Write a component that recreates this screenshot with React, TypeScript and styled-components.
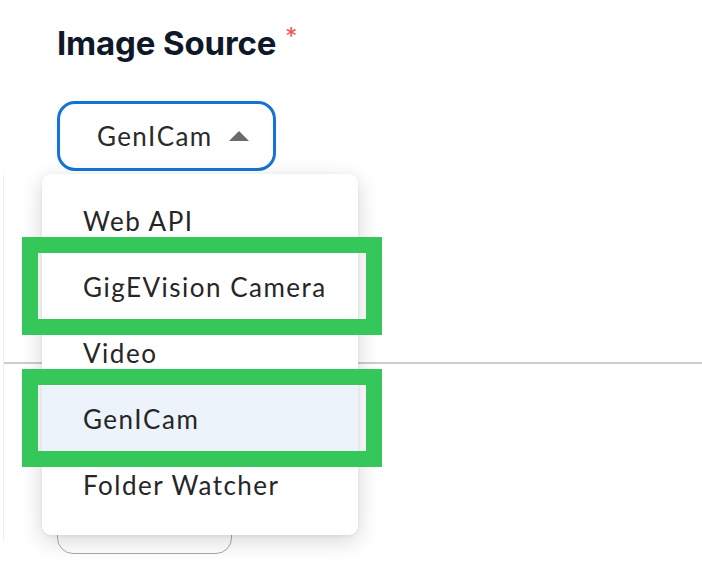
import React from 'react'
import styled, { createGlobalStyle } from 'styled-components'

const GlobalStyle = createGlobalStyle`
  html, body {
    margin: 0;
    padding: 0;
    background: #ffffff;
  }
  * {
    box-sizing: border-box;
  }
`

const sources = ['Web API', 'GigEVision Camera', 'Video', 'GenICam', 'Folder Watcher']
const marked = ['GigEVision Camera', 'GenICam']

const App = () => {
  const [open] = React.useState(true)
  const selected = 'GenICam'

  return (
    <Page>
      <GlobalStyle />
      <Title>
        <span>Image Source</span>
        <Required>*</Required>
      </Title>

      <SelectWrap>
        <Select>
          <SelectLabel>{selected}</SelectLabel>
          <Caret />
        </Select>

        {open ? (
          <Menu>
            {sources.map((s) => (
              <Item key={s} $active={s === selected} $marked={marked.includes(s)}>
                {s}
              </Item>
            ))}
          </Menu>
        ) : null}
      </SelectWrap>

      <Panel>
        <Divider />
        <Ghost />
      </Panel>
    </Page>
  )
}

export default App

const Page = styled.div`
  position: relative;
  width: 702px;
  height: 572px;
  overflow: hidden;
  font-family: Lato, 'Noto Sans', sans-serif;
`

const Title = styled.h2`
  display: flex;
  align-items: flex-start;
  gap: 9px;
  margin: 0;
  height: 63px;
  padding: 23px 0 0 57px;
  font-family: Inter, 'Noto Sans', sans-serif;
  font-weight: 700;
  font-size: 33px;
  line-height: 40px;
  color: #0f1828;
  letter-spacing: -0.15px;
`

const Required = styled.span`
  margin-top: 2px;
  color: #f2564d;
  font-size: 24px;
  line-height: 24px;
  font-weight: 400;
`

const SelectWrap = styled.div`
  position: relative;
  margin: 38px 0 0 57px;
  width: 219px;
  z-index: 2;
`

const Select = styled.div`
  display: flex;
  align-items: center;
  gap: 16px;
  height: 70px;
  padding-left: 37px;
  border: 3px solid #1473d6;
  border-radius: 18px;
  background: #fff;
`

const SelectLabel = styled.span`
  font-size: 26px;
  letter-spacing: 1.4px;
  color: #2a2a2a;
`

const Caret = styled.span`
  width: 0;
  height: 0;
  border-left: 10px solid transparent;
  border-right: 10px solid transparent;
  border-bottom: 10px solid #6b6b6b;
`

const Menu = styled.ul`
  position: absolute;
  top: calc(100% + 3px);
  left: -15px;
  width: 316px;
  margin: 0;
  padding: 14px 0 17px;
  list-style: none;
  background: #fff;
  border-radius: 9px;
  box-shadow: 0 6px 22px rgba(0, 0, 0, 0.16), 0 1px 4px rgba(0, 0, 0, 0.06);
`

const Item = styled.li<{ $active?: boolean; $marked?: boolean }>`
  position: relative;
  display: flex;
  align-items: center;
  height: 66px;
  padding-left: 41px;
  font-size: 26px;
  letter-spacing: 1.5px;
  color: #262626;
  background: ${(p) => (p.$active ? '#ecf3fb' : 'transparent')};

  &::after {
    content: '';
    display: ${(p) => (p.$marked ? 'block' : 'none')};
    position: absolute;
    top: -17px;
    bottom: -15px;
    left: -20px;
    right: -24px;
    border: 16px solid #35c759;
  }
`

const Panel = styled.div`
  margin: 4px 0 0 3px;
  padding-top: 187px;
  border-left: 1px solid #efefef;
  height: 366px;
`

const Divider = styled.div`
  height: 2px;
  background: #c9cdd2;
`

const Ghost = styled.div`
  margin: 139px 0 0 53px;
  width: 175px;
  height: 51px;
  border: 1.5px solid #a9a9a9;
  border-radius: 16px;
`
